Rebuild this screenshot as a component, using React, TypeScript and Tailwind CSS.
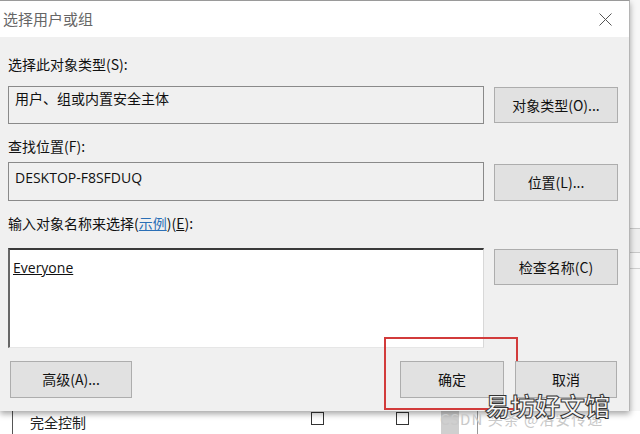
const cjk = { fontFamily: '"Noto Sans CJK SC", "Noto Sans", sans-serif' };

function Btn({ label, className = "" }: { label: React.ReactNode; className?: string }) {
  return (
    <div
      className={`flex items-center justify-center bg-[#e1e1e1] border border-[#adadad] text-[14px] text-[#111] ${className}`}
    >
      {label}
    </div>
  );
}

function CloseIcon() {
  return (
    <svg width="13" height="13" viewBox="0 0 13 13">
      <path d="M0.5 0.5 L12.5 12.5 M12.5 0.5 L0.5 12.5" stroke="#555" strokeWidth="1" fill="none" />
    </svg>
  );
}

export default function App() {
  return (
    <div className="w-[640px] h-[434px] bg-white overflow-hidden relative" style={cjk}>
      <div className="flex h-[411px]">
        <div className="relative z-10 w-[630px] h-[411px] flex flex-col border-t border-[#9a9a9a] border-r border-r-[#b5b5b5] shadow-[0_3px_6px_rgba(0,0,0,0.35)]">
          {/* title bar */}
          <div className="h-[36px] bg-white flex items-center justify-between pl-[3px] pr-[17px]">
            <span className="text-[15px] text-[#666]">选择用户或组</span>
            <CloseIcon />
          </div>

          {/* body */}
          <div className="flex-1 bg-[#f0f0f0] flex flex-col px-[8px] pt-[16px]">
            <div className="h-[22px] text-[14px] text-[#111] leading-[22px]">选择此对象类型(S):</div>
            <div className="flex gap-[10px] mt-[11px] items-start">
              <div className="w-[476px] h-[38px] border border-[#8a8a8a] bg-[#f0f0f0] px-[6px] pt-[1px] text-[14px] text-[#111]">
                用户、组或内置安全主体
              </div>
              <Btn label="对象类型(O)..." className="w-[124px] h-[36px] mt-[1px]" />
            </div>

            <div className="h-[22px] mt-[11px] text-[14px] text-[#111] leading-[22px]">查找位置(F):</div>
            <div className="flex gap-[10px] mt-[5px] items-start">
              <div
                className="w-[476px] h-[39px] border border-[#8a8a8a] bg-[#f0f0f0] px-[6px] pt-[4px] text-[14px] text-[#111]"
                style={{ fontFamily: '"Open Sans", "Noto Sans", sans-serif' }}
              >
                DESKTOP-F8SFDUQ
              </div>
              <Btn label="位置(L)..." className="w-[124px] h-[37px] mt-[2px]" />
            </div>

            <div className="h-[22px] mt-[11px] text-[14px] text-[#111] leading-[22px]">
              输入对象名称来选择(<span className="text-[#2a6fb6] underline">示例</span>)(<span className="underline">E</span>):
            </div>
            <div className="flex gap-[10px] mt-[14px] items-start">
              <div className="w-[476px] h-[100px] border-t-2 border-l-2 border-t-[#3a3a3a] border-l-[#666] border-r border-b border-r-[#d8d8d8] border-b-[#e6e6e6] bg-white px-[3px] pt-[4px]">
                <span
                  className="text-[14px] text-[#111] underline"
                  style={{ fontFamily: '"Open Sans", "Noto Sans", sans-serif' }}
                >
                  Everyone
                </span>
              </div>
              <Btn label="检查名称(C)" className="w-[124px] h-[36px] mt-[1px]" />
            </div>

            <div className="flex items-start mt-[13px] pl-[2px] pr-[4px]">
              <Btn label="高级(A)..." className="w-[122px] h-[37px]" />
              <div className="flex-1" />
              <div className="border-2 border-[#d23b3b] w-[134px] h-[73px] mt-[-24px] flex items-start justify-end pr-[12px] pt-[22px]">
                <Btn label="确定" className="w-[104px] h-[37px]" />
              </div>
              <Btn label="取消" className="w-[102px] h-[37px] ml-[-3px]" />
            </div>
          </div>
        </div>

        {/* background window at the right */}
        <div className="flex-1 bg-[#f7f7f7] flex flex-col">
          <div className="h-[228px]" />
          <div className="h-[1px] bg-[#c8c8c8]" />
          <div className="h-[23px] bg-[#eeeeee]" />
          <div className="h-[1px] bg-[#c8c8c8]" />
          <div className="h-[15px]" />
          <div className="h-[1px] bg-[#d0d0d0]" />
        </div>
      </div>

      {/* background window below */}
      <div className="h-[23px] flex items-center bg-white">
        <div className="w-[1px] h-full bg-[#555] ml-[12px]" />
        <span className="ml-[17px] text-[14px] text-[#222]">完全控制</span>
        <div className="w-[13px] h-[13px] border border-[#333] ml-[225px] mt-[-8px]" />
        <div className="w-[13px] h-[13px] border border-[#333] ml-[72px] mt-[-8px]" />
        <div className="w-[18px] h-full bg-[#cfcfcf] ml-[32px]" />
        <div className="w-[1px] h-full bg-[#999] ml-[18px]" />
      </div>

      {/* watermark */}
      <div className="absolute left-[440px] top-[408px] z-20 text-[15px] text-[#c9c9c9] tracking-[1px]">
        CSDN 头条 @洛安传递
      </div>
      <div
        className="absolute left-[485px] top-[387px] z-20 text-[25px] leading-[36px] text-[#f4f4f4] font-bold"
        style={{ WebkitTextStroke: "1px #333" }}
      >
        易坊好文馆
      </div>
    </div>
  );
}
